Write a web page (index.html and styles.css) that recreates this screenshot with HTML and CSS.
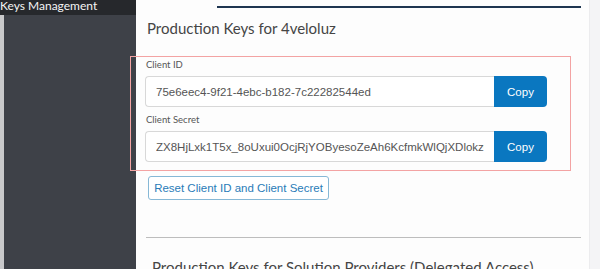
FILE: index.html
```html
<!DOCTYPE html>
<html lang="en">
<head>
  <meta charset="UTF-8">
  <meta name="viewport" content="width=device-width, initial-scale=1.0">
  <title>Keys Management</title>
  <link rel="stylesheet" href="styles.css">
</head>
<body>
  <aside class="sidebar">
    <div class="sidebar-head">Keys Management</div>
    <div class="sidebar-body"></div>
  </aside>

  <main class="main">
    <div class="tab-line"></div>
    <h2 class="section-title">Production Keys for 4veloluz</h2>

    <div class="keys">
      <label class="field-label">Client ID</label>
      <div class="key-row">
        <input class="key-input" type="text" value="75e6eec4-9f21-4ebc-b182-7c22282544ed" readonly>
        <button class="copy-btn">Copy</button>
      </div>

      <label class="field-label">Client Secret</label>
      <div class="key-row">
        <input class="key-input" type="text" value="ZX8HjLxk1T5x_8oUxui0OcjRjYOByesoZeAh6KcfmkWlQjXDlokzQ" readonly>
        <button class="copy-btn">Copy</button>
      </div>
    </div>

    <button class="reset-btn">Reset Client ID and Client Secret</button>

    <hr class="divider">
    <h2 class="section-title lower">Production Keys for Solution Providers (Delegated Access)</h2>
  </main>

  <div class="scroll-strip"></div>

  <!-- annotation box drawn over the key fields -->
  <div class="highlight"></div>
</body>
</html>
```

FILE: styles.css
```css
body {
  margin: 0;
  height: 269px;
  overflow: hidden;
  display: flex;
  position: relative;
  background-color: #fdfdfd;
  font-family: Lato, "Open Sans", sans-serif;
}
.sidebar {
  width: 136px;
  display: flex;
  flex-direction: column;
  flex-shrink: 0;
}
.sidebar-head {
  height: 15px;
  background-color: #26282c;
  color: #f4f4f4;
  font-size: 12px;
  line-height: 12px;
  white-space: nowrap;
  overflow: hidden;
}
.sidebar-body {
  flex: 1;
  background-color: #3e4148;
  border-left: 4px solid #c9c9cb;
}
.main {
  flex: 1;
  padding-top: 6px;
}
.tab-line {
  height: 2px;
  background-color: #1e3550;
  margin-left: 81px;
  margin-right: 8px;
}
.section-title {
  margin: 11px 0 0 11px;
  font-size: 15px;
  font-weight: normal;
  line-height: 18px;
  color: #454545;
  white-space: nowrap;
}
.keys {
  margin: 22px 0 0 9px;
  width: 402px;
}
.field-label {
  display: block;
  font-size: 9.5px;
  line-height: 12px;
  color: #555;
  margin-left: 1px;
  margin-bottom: 5px;
}
.key-row {
  display: flex;
  height: 31px;
  margin-bottom: 7px;
}
.key-input {
  flex: 1;
  min-width: 0;
  box-sizing: border-box;
  height: 31px;
  border: 1px solid #d8d8d8;
  border-right: none;
  border-radius: 4px 0 0 4px;
  background-color: #fff;
  padding: 0 10px;
  font-family: "Liberation Sans", Arial, sans-serif;
  font-size: 11.5px;
  color: #555;
  outline: none;
}
.copy-btn {
  width: 53px;
  height: 31px;
  border: none;
  border-radius: 0 4px 4px 0;
  background-color: #0a77c0;
  color: #fff;
  font-family: "Liberation Sans", Arial, sans-serif;
  font-size: 11.5px;
  cursor: pointer;
}
.reset-btn {
  display: block;
  margin: 14px 0 0 12px;
  height: 24px;
  width: 181px;
  padding: 0;
  background-color: #fff;
  border: 1px solid #86b8d6;
  border-radius: 3px;
  color: #2a7cb8;
  font-family: "Liberation Sans", Arial, sans-serif;
  font-size: 11.5px;
  cursor: pointer;
}
.divider {
  margin: 37px 8px 0 10px;
  border: none;
  border-top: 1px solid #bdbdbd;
}
.section-title.lower {
  margin: 20px 0 0 16px;
}
.scroll-strip {
  width: 10px;
  flex-shrink: 0;
  background-color: #f4f4f6;
  border-left: 1px solid #ececee;
}
.highlight {
  position: absolute;
  left: 130px;
  top: 56px;
  width: 439px;
  height: 113px;
  border: 1px solid #f3a3a3;
  pointer-events: none;
}
```
